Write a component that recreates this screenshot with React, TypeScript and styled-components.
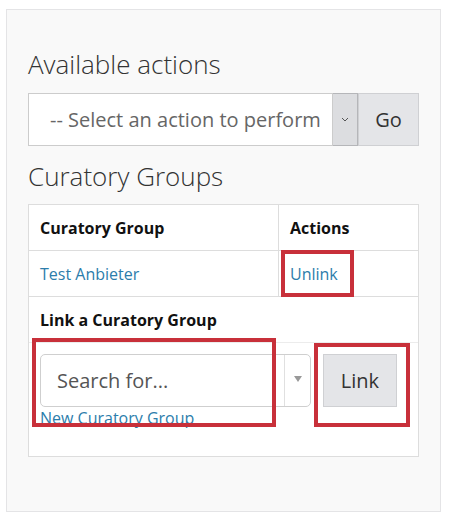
import React from 'react';
import styled, { createGlobalStyle } from 'styled-components';

const GlobalStyle = createGlobalStyle`
  body {
    margin: 0;
    background: #ffffff;
    font-family: 'Open Sans', 'Liberation Sans', sans-serif;
    color: #222;
  }
`;

const Panel = styled.div`
  margin: 9px 0 0 6px;
  width: 435px;
  height: 503px;
  box-sizing: border-box;
  border: 1px solid #e4e4e6;
  background: #f9f9f9;
  padding: 39px 21px 0 21px;
`;

const Heading = styled.h2`
  margin: 0;
  font-size: 26px;
  font-weight: 300;
  line-height: 31px;
  color: #333;
`;

const ActionRow = styled.div`
  display: flex;
  height: 53px;
  margin: 13px 0 15px 0;
`;

const SelectBox = styled.div`
  flex: 1;
  display: flex;
  align-items: center;
  background: #fff;
  border: 1px solid #cccccc;
  padding-left: 21px;
  font-size: 20px;
  color: #666;
  white-space: nowrap;
  overflow: hidden;
`;

const SelectArrow = styled.div`
  width: 24px;
  display: flex;
  align-items: center;
  justify-content: center;
  background: #dcdde0;
  border: 1px solid #b5b6b9;
  border-left: none;
`;

const GreyButton = styled.div<{ $w: number }>`
  width: ${(p) => p.$w}px;
  box-sizing: border-box;
  display: flex;
  align-items: center;
  justify-content: center;
  background: #e4e5e8;
  border: 1px solid #cfd0d3;
  font-size: 20px;
  color: #333;
`;

const Table = styled.div`
  margin-top: 12px;
  background: #fff;
  border: 1px solid #dddddd;
`;

const Row = styled.div<{ $split?: boolean; $line?: string }>`
  display: grid;
  grid-template-columns: ${(p) => (p.$split ? '250px 1fr' : '1fr')};
  border-bottom: 1px solid ${(p) => p.$line || '#dddddd'};
`;

const Cell = styled.div<{ $divider?: boolean; $bold?: boolean }>`
  position: relative;
  height: 45px;
  display: flex;
  align-items: center;
  padding-left: 11px;
  font-size: 16px;
  font-weight: ${(p) => (p.$bold ? 700 : 400)};
  color: #111;
  border-right: ${(p) => (p.$divider ? '1px solid #dddddd' : 'none')};
`;

const LinkText = styled.span`
  color: #2c7dab;
  font-size: 16px;
`;

const FormRow = styled.div`
  position: relative;
  height: 113px;
  padding: 11px 0 0 11px;
  box-sizing: border-box;
`;

const FormLine = styled.div`
  display: flex;
  gap: 12px;
  height: 53px;
`;

const SearchBox = styled.div`
  width: 269px;
  display: flex;
  border: 1px solid #cfcfcf;
  border-radius: 5px;
  background: #fff;
`;

const SearchText = styled.div`
  flex: 1;
  display: flex;
  align-items: center;
  padding-left: 16px;
  font-size: 20px;
  color: #555;
  border-right: 1px solid #e0e0e0;
`;

const Caret = styled.div`
  width: 25px;
  display: flex;
  justify-content: center;
  padding-top: 21px;
  box-sizing: border-box;
  &::after {
    content: '';
    border-left: 4px solid transparent;
    border-right: 4px solid transparent;
    border-top: 6px solid #999;
    height: 0;
  }
`;

const NewLink = styled.div`
  margin-top: 0px;
  line-height: 22px;
`;

const Marker = styled.div<{ $l: number; $t: number; $w: number; $h: number }>`
  position: absolute;
  left: ${(p) => p.$l}px;
  top: ${(p) => p.$t}px;
  width: ${(p) => p.$w}px;
  height: ${(p) => p.$h}px;
  box-sizing: border-box;
  border: 4px solid #c8303a;
  pointer-events: none;
`;

export default function App() {
  return (
    <>
      <GlobalStyle />
      <Panel>
        <Heading>Available actions</Heading>
        <ActionRow>
          <SelectBox>-- Select an action to perform</SelectBox>
          <SelectArrow>
            <svg width="8" height="5" viewBox="0 0 8 5">
              <path d="M1 1 L4 4 L7 1" fill="none" stroke="#555" strokeWidth="1" />
            </svg>
          </SelectArrow>
          <GreyButton $w={61}>Go</GreyButton>
        </ActionRow>
        <Heading>Curatory Groups</Heading>
        <Table>
          <Row $split>
            <Cell $divider $bold>Curatory Group</Cell>
            <Cell $bold>Actions</Cell>
          </Row>
          <Row $split>
            <Cell $divider>
              <LinkText>Test Anbieter</LinkText>
            </Cell>
            <Cell>
              <LinkText>Unlink</LinkText>
              <Marker $l={2} $t={-1} $w={73} $h={47} />
            </Cell>
          </Row>
          <Row $line="#ececec">
            <Cell $bold>Link a Curatory Group</Cell>
          </Row>
          <FormRow>
            <FormLine>
              <SearchBox>
                <SearchText>Search for...</SearchText>
                <Caret />
              </SearchBox>
              <GreyButton $w={74}>Link</GreyButton>
            </FormLine>
            <NewLink>
              <LinkText>New Curatory Group</LinkText>
            </NewLink>
            <Marker $l={3} $t={-5} $w={244} $h={89} />
            <Marker $l={285} $t={0} $w={96} $h={84} />
          </FormRow>
        </Table>
      </Panel>
    </>
  );
}
